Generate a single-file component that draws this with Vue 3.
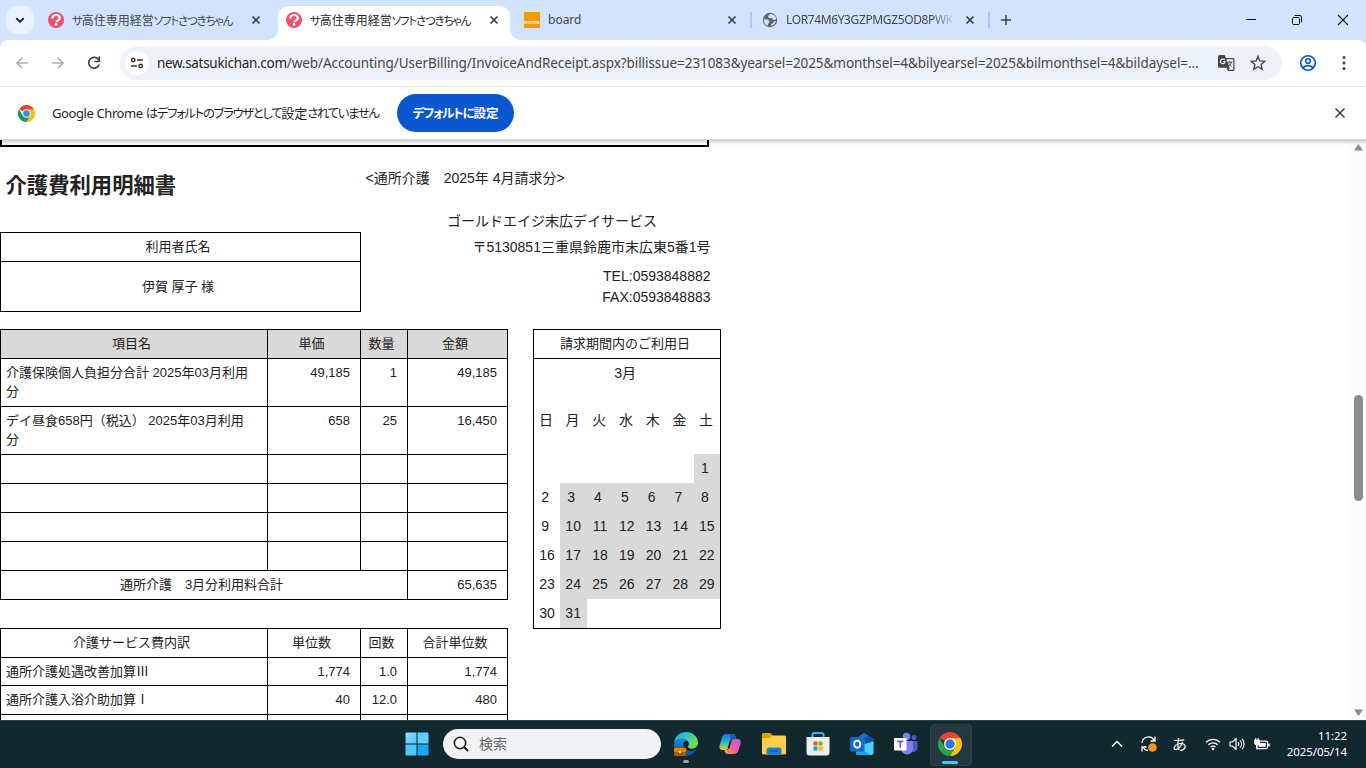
<script setup>
const tabs = [
  { parts: ['サ', '高住専用経営', 'ソフトさつきちゃん'], icon: 'q', active: false, sep: false },
  { parts: ['サ', '高住専用経営', 'ソフトさつきちゃん'], icon: 'q', active: true, sep: false },
  { parts: ['board'], icon: 'norma', active: false, sep: true, latin: true },
  { parts: ['LOR74M6Y3GZPMGZ5OD8PWK'], icon: 'globe', active: false, sep: true, latin: true, fade: true },
]
const items = [
  ['介護保険個人負担分合計 2025年03月利用分', '49,185', '1', '49,185'],
  ['デイ昼食658円（税込） 2025年03月利用分', '658', '25', '16,450'],
]
const services = [
  ['通所介護処遇改善加算Ⅲ', '1,774', '1.0', '1,774'],
  ['通所介護入浴介助加算Ⅰ', '40', '12.0', '480'],
  ['', '', '', ''],
]
const weekdays = ['日', '月', '火', '水', '木', '金', '土']
const days = []
for (let i = -5; i <= 36; i++) {
  const inMonth = i >= 1 && i <= 31
  const col = (i + 5) % 7
  days.push({
    text: inMonth ? (i < 10 ? i + ' ' : String(i)) : '',
    used: inMonth && col !== 0,
  })
}
</script>

<template>
  <div class="screen">
    <header class="strip">
      <div class="tabsearch">
        <svg width="12" height="12" viewBox="0 0 12 12"><path d="M2.3 4.2 6 7.9l3.7-3.7" fill="none" stroke="#1f1f1f" stroke-width="1.9" /></svg>
      </div>
      <div v-for="(t, i) in tabs" :key="i" class="tab" :class="{ active: t.active, sep: t.sep }">
        <svg v-if="t.icon === 'q'" class="fav" width="16" height="16" viewBox="0 0 16 16">
          <circle cx="8" cy="8" r="8" fill="#f0506e" />
          <path d="M4.300 6.500C4.400 4.400 6 3 8.100 3c2.100 0 3.700 1.200 3.700 3 0 2.400-3 2.200-3.500 4.200" fill="none" stroke="#fff" stroke-width="2.200" />
          <circle cx="8" cy="12.400" r="1.300" fill="#fff" />
        </svg>
        <div v-else-if="t.icon === 'norma'" class="fav norma">norma</div>
        <svg v-else class="fav" width="16" height="16" viewBox="0 0 16 16">
          <circle cx="8" cy="8" r="7.2" fill="#5f6368" />
          <path d="M8.200 1.900 6.200 3.800v1.600L8 6.200l2-.2.5 1.600 2.200.3 1.600-1.200C13.900 4 11.400 1.900 8.200 1.900zM1.800 7.200l3.600.3 2.200 1.800-.6 1.800L5.800 12v1.800C3.300 12.900 1.700 10.400 1.800 7.200zM9 13.900l.3-1.900 2-1 .6-1.700 2-.3c-.5 2.600-2.500 4.600-4.900 4.900z" fill="#d3e3fd" />
        </svg>
        <span class="title" :class="{ latin: t.latin, fade: t.fade }"><span v-for="(p, k) in t.parts" :key="k" :class="{ kana: !t.latin && k !== 1 }">{{ p }}</span></span>
        <svg class="x" width="16" height="16" viewBox="0 0 16 16"><path d="m4.500 4.500 7 7m0-7-7 7" stroke="#3c3f43" stroke-width="1.700" /></svg>
      </div>
      <div class="plus">
        <svg width="12" height="12" viewBox="0 0 12 12"><path d="M6 1v10M1 6h10" stroke="#3c4043" stroke-width="1.500" /></svg>
      </div>
      <div class="winctl">
        <svg width="46" height="40" viewBox="0 0 46 40"><path d="M18 19.500h10" stroke="#111" /></svg>
        <svg width="46" height="40" viewBox="0 0 46 40"><rect x="18.500" y="17.500" width="7" height="7" rx="1.200" fill="none" stroke="#111" /><path d="M20.500 15.500h5.500a1.500 1.500 0 0 1 1.500 1.500v5.500" fill="none" stroke="#111" /></svg>
        <svg width="46" height="40" viewBox="0 0 46 40"><path d="m18 15 10 10m0-10L18 25" stroke="#111" stroke-width="1.100" /></svg>
      </div>
    </header>

    <div class="toolbarwrap">
      <div class="toolbar">
        <svg class="nav" width="36" height="46" viewBox="0 0 36 46"><path d="M28 23H17m5.300-5.200L17 23l5.300 5.200" fill="none" stroke="#aaacaf" stroke-width="1.600" /></svg>
        <svg class="nav" width="36" height="46" viewBox="0 0 36 46"><path d="M16 23h11m-5.300-5.200L27 23l-5.300 5.200" fill="none" stroke="#aaacaf" stroke-width="1.600" /></svg>
        <svg class="nav" width="36" height="46" viewBox="0 0 36 46"><path d="M26.600 19.800a5.400 5.400 0 1 0 .6 4.700" fill="none" stroke="#3c4043" stroke-width="1.700" /><path d="M27.300 16.600v4.900h-4.900" fill="none" stroke="#3c4043" stroke-width="1.700" /></svg>
        <div class="omni">
          <div class="site">
            <svg width="14" height="14" viewBox="0 0 14 14" fill="none" stroke="#303134" stroke-width="1.500"><circle cx="3.200" cy="4" r="1.700" /><path d="M7 4h6M1 10h6" /><circle cx="10.700" cy="10" r="1.700" /></svg>
          </div>
          <div class="url"><b>new.satsukichan.com</b>/web/Accounting/UserBilling/InvoiceAndReceipt.aspx?billissue=231083&amp;yearsel=2025&amp;monthsel=4&amp;bilyearsel=2025&amp;bilmonthsel=4&amp;bildaysel=...</div>
          <svg class="translate" width="18" height="18" viewBox="0 0 18 18">
            <path d="M2.500 1h5.300l1 3H16a1.500 1.500 0 0 1 1.500 1.500v10A1.500 1.500 0 0 1 16 17h-5.200l-1.200-3.300H2.500A1.500 1.500 0 0 1 1 12.200V2.500A1.500 1.500 0 0 1 2.500 1z" fill="#474747" />
            <path d="M9.300 5.200H15.500a.8.800 0 0 1 .8.800v9a.8.800 0 0 1-.8.800H11.700l1-2z" fill="#edf1fa" />
            <path d="M7.700 6.100a2.300 2.300 0 1 0 .3 1.700H5.900" fill="none" stroke="#fff" stroke-width="1.100" />
            <path d="M10.300 8.200h5M12.800 7v1.200m1.500 0c-.4 1.800-1.300 3-3 4m.5-2.800 2.900 3.200" fill="none" stroke="#474747" />
          </svg>
          <svg class="star" width="18" height="18" viewBox="0 0 18 18"><path d="m9 2.400 1.900 4.500 4.900.4-3.700 3.200 1.100 4.800L9 12.700l-4.200 2.600 1.100-4.800-3.700-3.200 4.900-.4z" fill="none" stroke="#474747" stroke-width="1.400" /></svg>
        </div>
        <svg class="user" width="18" height="18" viewBox="0 0 18 18" fill="none" stroke="#0b57d0" stroke-width="1.600"><circle cx="9" cy="9" r="7.300" /><circle cx="9" cy="7" r="2.300" /><path d="M4 14.100c1.200-1.800 3-2.500 5-2.500s3.800.7 5 2.500" /></svg>
        <svg class="dots" width="4" height="16" viewBox="0 0 4 16" fill="#474747"><circle cx="2" cy="2.500" r="1.600" /><circle cx="2" cy="8" r="1.600" /><circle cx="2" cy="13.500" r="1.600" /></svg>
      </div>
    </div>

    <div class="infobar">
      <svg width="17" height="17" viewBox="0 0 24 24">
        <path d="M12 12 1.600 6A12 12 0 0 1 22.400 6z" fill="#ea4335" />
        <path d="M12 6h10.400A12 12 0 0 1 12 24l5.200-9z" fill="#fbbc05" />
        <path d="M1.600 6A12 12 0 0 0 12 24l5.200-9H6.800z" fill="#0f9d58" />
        <circle cx="12" cy="12" r="6" fill="#fff" /><circle cx="12" cy="12" r="4.700" fill="#4285f4" />
      </svg>
      <span class="msg"><span class="gc">Google Chrome </span><span class="kana">はデフォルトのブラウザとして</span>設定<span class="kana">されていません</span></span>
      <button class="setdef"><span class="kana">デフォルトに</span>設定</button>
      <svg class="close" width="16" height="16" viewBox="0 0 16 16"><path d="m3.500 3.500 9 9m0-9-9 9" stroke="#3c4043" stroke-width="1.500" /></svg>
    </div>

    <main class="page">
      <div class="shade"></div>
      <div class="doc">
        <div class="prevbox"></div>
        <div class="top">
          <div class="left">
            <h1>介護費利用明細書</h1>
            <div class="who">
              <div class="wh">利用者氏名</div>
              <div class="wn">伊賀 厚子 様</div>
            </div>
          </div>
          <div class="right">
            <div class="period">&lt;通所介護　2025年 4月請求分&gt;</div>
            <div class="fac">ゴールドエイジ末広デイサービス</div>
            <div class="addr">〒5130851三重県鈴鹿市末広東5番1号</div>
            <div class="tel">TEL:0593848882</div>
            <div class="fax">FAX:0593848883</div>
          </div>
        </div>
        <div class="cols">
          <div>
            <div class="tbl">
              <div class="row head grey"><div>項目名</div><div>単価</div><div>数量</div><div>金額</div></div>
              <div v-for="(r, i) in items" :key="i" class="row tall"><div v-for="(c, j) in r" :key="j">{{ c }}</div></div>
              <div v-for="n in 4" :key="'e' + n" class="row"><div></div><div></div><div></div><div></div></div>
              <div class="row total"><div>通所介護　3月分利用料合計</div><div>65,635</div></div>
            </div>
            <div class="tbl second">
              <div class="row head"><div>介護サービス費内訳</div><div>単位数</div><div>回数</div><div>合計単位数</div></div>
              <div v-for="(r, i) in services" :key="i" class="row" :class="{ low: i === 0 }"><div v-for="(c, j) in r" :key="j">{{ c }}</div></div>
            </div>
          </div>
          <div class="cal">
            <div class="ch">請求期間内のご利用日</div>
            <div class="cm">3月 </div>
            <div class="cg wk"><div v-for="w in weekdays" :key="w">{{ w }}</div></div>
            <div class="cg"><div v-for="(d, i) in days" :key="i" :class="{ used: d.used }">{{ d.text }}</div></div>
          </div>
        </div>
      </div>
      <div class="sb">
        <svg width="9" height="7" viewBox="0 0 9 7"><path d="M4.500 0 9 6.500H0z" fill="#8b8b8b" /></svg>
        <div class="thumb"></div>
        <svg width="9" height="7" viewBox="0 0 9 7"><path d="M4.500 7 9 .5H0z" fill="#8b8b8b" /></svg>
      </div>
    </main>

    <footer class="bar">
      <div class="app start">
        <svg width="24" height="24" viewBox="0 0 24 24">
          <defs><linearGradient id="win" x1="0" y1="0" x2="1" y2="1"><stop offset="0" stop-color="#8fe3ff" /><stop offset="1" stop-color="#4cc3fb" /></linearGradient></defs>
          <path d="M.5 1.500a1 1 0 0 1 1-1H11.500v11H.5z" fill="url(#win)" /><path d="M12.500.5h10a1 1 0 0 1 1 1v10h-11z" fill="#5fd0fd" />
          <path d="M.5 12.500h11v11h-10a1 1 0 0 1-1-1z" fill="#4cc8fd" /><path d="M12.500 12.500h11v10a1 1 0 0 1-1 1h-10z" fill="#19a5fb" />
        </svg>
      </div>
      <div class="find">
        <svg width="16" height="16" viewBox="0 0 16 16"><circle cx="7" cy="7" r="5.700" fill="none" stroke="#222" stroke-width="1.600" /><path d="m11 11 4 4" stroke="#222" stroke-width="2" /></svg>
        <span>検索</span>
      </div>
      <div class="app">
        <svg width="24" height="24" viewBox="0 0 24 24">
          <defs>
            <linearGradient id="e1" x1="0" y1="0" x2="1" y2=".5"><stop offset="0" stop-color="#1ba0e2" /><stop offset=".5" stop-color="#35c1d4" /><stop offset="1" stop-color="#6be04b" /></linearGradient>
            <linearGradient id="e2" x1="0" y1="0" x2="0" y2="1"><stop offset="0" stop-color="#1b8fe0" /><stop offset="1" stop-color="#0c4a9a" /></linearGradient>
          </defs>
          <path d="M0 12C.8 8.900 4.500 6.800 8.600 6.800c2 0 3.700.7 4.800 1.900C9.500 8.500 9 11.700 9.500 13c1 4 4.500 6.600 7.500 6.200 2-.3 3.500-.8 4.800-1.600C19.800 21.800 16.300 24 12 24 5.300 24-.4 18.500 0 12z" fill="url(#e2)" />
          <path d="M0 11C.6 4.500 5.500 0 12 0c7 0 12 5 12 10.500 0 4-2.700 6.200-6 6.200-2.300 0-4.200-.8-4.200-1.900 0-.7 1-1.200 1-2.900C14.800 9 12 6.800 8.600 6.800 4.500 6.800 1.200 9 0 11z" fill="url(#e1)" />
          <rect x="0" y="16" width="12" height="8" fill="#e08600" /><rect x="0" y="20" width="12" height="4" fill="#a65a00" /><rect x="5" y="19" width="2" height="2" fill="#ffdc6b" />
        </svg>
        <i class="pip"></i>
      </div>
      <div class="app">
        <svg width="24" height="24" viewBox="0 0 24 24">
          <defs>
            <linearGradient id="c1" x1="0" y1="0" x2="0" y2="1"><stop offset="0" stop-color="#1470d8" /><stop offset=".5" stop-color="#29b5c9" /><stop offset="1" stop-color="#e5d321" /></linearGradient>
            <linearGradient id="c2" x1="1" y1="0" x2="0" y2="1"><stop offset="0" stop-color="#b35df0" /><stop offset=".5" stop-color="#ef5a9b" /><stop offset="1" stop-color="#ffa05a" /></linearGradient>
          </defs>
          <path d="M8.500 2h6.300c1.700 0 2.300 1 2.700 2.300l.8 2.700h-3c-1.700 0-2.500.8-3 2.500l-1.700 5.700c-.4 1.500-1.300 2.800-3.200 2.800H4.500C2 18 1 16 1.600 13.500l2.300-8C4.500 3.400 5.800 2 8.500 2z" fill="url(#c1)" />
          <path d="M12.500 2h2.300c1.700 0 2.300 1 2.700 2.300l.8 2.700H15c-1.500 0-2.400.8-2.800 2z" fill="#1459bd" />
          <path d="M15.500 22H10c-1.700 0-2.700-1-3.100-2.300L6.400 18h2c1.700 0 2.700-1 3.200-2.800l1.600-5.500C13.700 8 14.600 7 16.400 7h3.200c2.500 0 3.600 2 3 4.500l-2.200 7c-.7 2.100-2.200 3.500-4.900 3.500z" fill="url(#c2)" />
          <path d="m13.400 9-2 7H9.600l1.800-6c.3-.6 1-1 2-1z" fill="#142a30" />
        </svg>
      </div>
      <div class="app">
        <svg width="26" height="24" viewBox="0 0 26 24">
          <path d="M1 2.500A1.500 1.500 0 0 1 2.500 1h7L12 3.500 10 7H1z" fill="#e29b00" />
          <path d="M1 6h8l2.500-2.500h12A1.500 1.500 0 0 1 25 5v16a1.500 1.500 0 0 1-1.500 1.500h-21A1.500 1.500 0 0 1 1 21z" fill="#ffcf48" />
          <path d="M5.500 22.500V18A2.500 2.500 0 0 1 8 15.500h10a2.500 2.500 0 0 1 2.500 2.500v4.500z" fill="#1683d8" /><path d="M8.500 19h9" stroke="#0a5da8" stroke-width="1.500" />
        </svg>
      </div>
      <div class="app">
        <svg width="24" height="24" viewBox="0 0 24 24">
          <path d="M6.500 6V2.500a1.500 1.500 0 0 1 1.500-1.500h8a1.500 1.500 0 0 1 1.500 1.500V6" fill="none" stroke="#2ab4f0" stroke-width="2" />
          <path d="M.5 5h23v15.500A3 3 0 0 1 20.500 23.500h-17a3 3 0 0 1-3-3z" fill="#eeeeef" />
          <path d="M7.500 9.500h4v4h-4z" fill="#f25022" /><path d="M12.500 9.500h4v4h-4z" fill="#7fba00" /><path d="M7.500 14.500h4v4h-4z" fill="#00a4ef" /><path d="M12.500 14.500h4v4h-4z" fill="#ffb900" />
        </svg>
      </div>
      <div class="app">
        <svg width="26" height="24" viewBox="0 0 26 24">
          <path d="M6 7 15 1l9.500 6v5H6z" fill="#1275cf" /><path d="M8 5h13v12H8z" fill="#35a8ea" /><path d="m14 6 6-2 4.500 4-7.500 6z" fill="#0b4fa5" />
          <path d="M7 14.500 24.500 9.500v11a2.500 2.500 0 0 1-2.500 2.500H9.500A2.500 2.500 0 0 1 7 20.500z" fill="#44d4f7" /><path d="M7 14 22 23H9.500A2.500 2.500 0 0 1 7 20.500z" fill="#1aa1e6" />
          <rect x="1" y="5" width="14.500" height="14.500" rx="1" fill="#0f6cca" /><ellipse cx="8.200" cy="12.200" rx="3.100" ry="3.600" fill="none" stroke="#fff" stroke-width="1.900" />
        </svg>
      </div>
      <div class="app">
        <svg width="26" height="24" viewBox="0 0 26 24">
          <circle cx="13.500" cy="4.500" r="3.700" fill="#7b83eb" /><circle cx="21" cy="5.500" r="2.500" fill="#5059c9" />
          <path d="M18 9h6.500v7.500a4 4 0 0 1-6.500 2.500z" fill="#5059c9" /><path d="M8 9h12v7.500a6 6 0 0 1-12 0z" fill="#7b83eb" />
          <rect x="1" y="6" width="12.500" height="12.500" rx="1" fill="#fff" /><path d="M4.300 9.300h6M7.300 9.300v6.500" stroke="#5b5fc7" stroke-width="1.700" />
        </svg>
      </div>
      <div class="app on">
        <svg width="24" height="24" viewBox="0 0 24 24">
          <path d="M12 12 1.600 6A12 12 0 0 1 22.400 6z" fill="#ea4335" />
          <path d="M12 6h10.400A12 12 0 0 1 12 24l5.200-9z" fill="#fbc116" />
          <path d="M1.600 6A12 12 0 0 0 12 24l5.200-9H6.800z" fill="#2da14c" />
          <circle cx="12" cy="12" r="6" fill="#fff" /><circle cx="12" cy="12" r="4.700" fill="#3474e0" />
        </svg>
        <i class="line"></i>
      </div>
      <div class="tray">
        <svg class="t1" width="12" height="8" viewBox="0 0 12 8"><path d="m1 6.500 5-5 5 5" fill="none" stroke="#fff" stroke-width="1.400" /></svg>
        <svg class="t2" width="18" height="18" viewBox="0 0 18 18"><path d="M2 8a6.500 6.500 0 0 1 12-3M15 1.500V6h-4.500M8 15.500a6.500 6.500 0 0 1-5-3M2 16.500V12h4.500" fill="none" stroke="#fff" stroke-width="1.300" /><circle cx="12.500" cy="12.500" r="4.300" fill="#f7931e" /></svg>
        <span class="ime">あ</span>
        <svg class="t3" width="16" height="14" viewBox="0 0 16 14"><path d="M1 5.300a10 10 0 0 1 14 0M3.300 7.800a6.700 6.700 0 0 1 9.400 0M5.500 10.100a3.500 3.500 0 0 1 5 0" fill="none" stroke="#fff" stroke-width="1.300" /><circle cx="8" cy="12" r="1.300" fill="#fff" /></svg>
        <svg class="t4" width="16" height="14" viewBox="0 0 16 14"><path d="M1 5h2.500L7 1.800v10.400L3.500 9H1z" fill="none" stroke="#fff" stroke-width="1.200" /><path d="M9 5a3 3 0 0 1 0 4M11 3.300a5.400 5.400 0 0 1 0 7.400M13 1.800a7.500 7.500 0 0 1 0 10.400" fill="none" stroke="#fff" stroke-width="1.100" /></svg>
        <svg class="t5" width="18" height="14" viewBox="0 0 18 14"><rect x="3.600" y="4.100" width="11" height="7.500" rx="1.500" fill="none" stroke="#fff" stroke-width="1.200" /><rect x="5.500" y="6" width="7.300" height="3.800" fill="#fff" /><path d="M16 6.500v3" stroke="#fff" stroke-width="1.500" /><path d="M1.500 3h5v2.500a2.500 2.500 0 0 1-5 0zM2.800 1v2M5.200 1v2M4 8v4.500" fill="#fff" stroke="#fff" /></svg>
        <div class="clock"><div>11:22</div><div>2025/05/14</div></div>
      </div>
    </footer>
  </div>
</template>

<style>
body { margin: 0; overflow: hidden; }
</style>

<style scoped>
* { box-sizing: border-box; }
.screen { width: 1366px; height: 768px; display: flex; flex-direction: column; overflow: hidden; background: #fff; font-family: "Noto Sans", "Noto Sans CJK JP", sans-serif; }
svg { display: block; flex: none; }
.strip { height: 40px; flex: none; display: flex; background: #d3e3fd; }
.tabsearch { width: 28px; height: 28px; margin: 6px; border-radius: 10px; background: #e9f1fe; display: flex; align-items: center; justify-content: center; }
.tab { width: 238px; height: 40px; padding-left: 8px; display: flex; align-items: center; position: relative; }
.tab > * { position: relative; }
.tab.active { z-index: 1; }
.tab.active::before { content: ""; position: absolute; left: 0; top: 6px; width: 232px; height: 34px; border-radius: 10px 10px 0 0; background: #fff; }
.tab.active::after { content: ""; position: absolute; left: -10px; bottom: 0; width: 252px; height: 10px; background: radial-gradient(circle at 0 0, transparent 9.500px, #fff 10px) 0 0 / 10px 10px no-repeat, radial-gradient(circle at 100% 0, transparent 9.500px, #fff 10px) 100% 0 / 10px 10px no-repeat; }
.tab.sep::before { content: ""; position: absolute; left: 234px; top: 12px; width: 2px; height: 16px; background: #a8c7fa; }
.fav { flex: none; }
.norma { width: 16px; height: 16px; background: #f29a05; color: #fff; font: bold 5px/20px "Liberation Sans", sans-serif; text-align: center; }
.title { width: 168px; margin-left: 8px; white-space: nowrap; font: 12px/18px "Noto Sans CJK JP", sans-serif; font-feature-settings: "palt"; color: #45474a; }
.title .kana { font-size: 11.500px; letter-spacing: -1.200px; }
.active .title { color: #1f1f1f; }
.title.latin { font: 12px/20px "Noto Sans", sans-serif; }
.title.fade { letter-spacing: -.38px; -webkit-mask-image: linear-gradient(90deg, #000 145px, transparent 170px); mask-image: linear-gradient(90deg, #000 145px, transparent 170px); }
.x { margin-left: 8px; }
.plus { width: 28px; display: flex; align-items: center; justify-content: center; }
.winctl { margin-left: auto; display: flex; }

.toolbarwrap { flex: none; background: #d3e3fd; height: 47px; }
.toolbar { height: 47px; border-radius: 8px 8px 0 0; background: #fff; border-bottom: 1px solid #dfe1e5; display: flex; align-items: center; }
.omni { margin-left: 12px; width: 1162px; height: 34px; border-radius: 17px; background: #edf1fa; display: flex; align-items: center; padding-left: 5px; }
.site { width: 24px; height: 24px; border-radius: 50%; background: #fff; display: flex; align-items: center; justify-content: center; }
.url { width: 1044px; margin-left: 8px; font-size: 13.500px; line-height: 20px; white-space: nowrap; color: #474747; letter-spacing: -.066px; }
.url b { font-weight: 400; color: #1f1f1f; letter-spacing: -.3px; }
.translate { margin-left: 16px; }
.star { margin-left: 14px; }
.user { margin-left: 17px; }
.dots { margin-left: 25px; }

.infobar { flex: none; height: 53px; display: flex; align-items: center; padding-left: 18px; background: #fff; border-bottom: 1px solid #d6d8d6; }
.msg { width: 345px; margin-left: 17px; white-space: nowrap; font: 13px/20px "Noto Sans CJK JP", sans-serif; font-feature-settings: "palt"; color: #1f1f1f; }
.msg .kana { font-size: 12.400px; letter-spacing: -1.330px; }
.gc { font-family: "Noto Sans", sans-serif; letter-spacing: -.4px; }
.setdef { width: 117px; height: 38px; border: 0; padding: 0; border-radius: 19px; background: #0b57d0; color: #fff; font: bold 12.500px/20px "Noto Sans CJK JP", sans-serif; font-feature-settings: "palt"; white-space: nowrap; }
.setdef .kana { font-size: 12.500px; letter-spacing: -1.200px; }
.close { margin-left: auto; margin-right: 18px; }

.page { height: 580px; flex: none; position: relative; display: flex; overflow: hidden; font-family: "Liberation Sans", "Noto Sans CJK JP", sans-serif; color: #222; background: #fff; }
.shade { position: absolute; left: 0; top: 0; width: 100%; height: 5px; background: linear-gradient(#cfd1cf, rgba(255, 255, 255, 0)); }
.doc { width: 1349px; flex: none; position: relative; }
.prevbox { width: 709px; height: 7px; border: 2px solid #000; border-top: 0; }
.top { display: flex; height: 182px; }
.left { width: 361px; }
h1 { margin: 21px 0 32px 5.500px; font: bold 21.330px/32px "Noto Sans CJK JP", sans-serif; white-space: nowrap; }
.who { width: 361px; height: 80px; border: 1px solid #000; font-size: 13px; text-align: center; }
.wh { height: 29px; line-height: 27px; border-bottom: 1px solid #000; padding-right: 5px; }
.wn { height: 49px; line-height: 49px; padding-right: 5px; }
.right { width: 350px; font-size: 14px; line-height: 20px; text-align: right; white-space: nowrap; }
.period { text-align: left; margin: 21px 0 0 4.500px; }
.fac { text-align: left; margin: 23px 0 0 86px; }
.addr { margin: 6px .5px 0 0; }
.tel { margin: 9px .5px 0 0; }
.fax { margin: 1px .5px 0 0; }
.cols { display: flex; align-items: flex-start; }
.tbl { width: 508px; border-left: 1px solid #000; border-top: 1px solid #000; font-size: 13px; line-height: 19px; }
.second { margin-top: 28px; }
.row { display: grid; grid-template-columns: 267px 93px 47px 100px; height: 29px; }
.row.tall { height: 48px; }
.row.low { height: 28px; }
.row > div { border-right: 1px solid #000; border-bottom: 1px solid #000; padding: 4px 10px 0 0; text-align: right; }
.row > div:first-child { text-align: left; padding: 4px 16px 0 5px; }
.row.head > div, .row.head > div:first-child { text-align: center; padding: 4px 5px 0 0; }
.row.grey > div { background: #d9d9d9; }
.row.total { grid-template-columns: 407px 100px; }
.row.total > div:first-child { text-align: center; padding-right: 10px; }
.cal { margin-left: 25px; width: 188px; height: 300px; border: 1px solid #000; font-size: 14px; }
.ch { height: 29px; line-height: 27px; border-bottom: 1px solid #000; text-align: center; font-size: 13px; padding-right: 4px; }
.cm { height: 48px; line-height: 29px; text-align: center; white-space: pre; }
.cg { display: grid; grid-template-columns: 26px repeat(5, 26.800px) 26px; line-height: 29px; grid-auto-rows: 29px; text-align: center; white-space: pre; }
.cg > div { padding-right: .5px; }
.cg > div:nth-child(7n + 1) { padding-right: 0; }
.wk { height: 47px; line-height: 27px; }
.wk > div, .wk > div:nth-child(7n + 1) { padding-right: 2px; }
.used { background: #d9d9d9; }
.sb { width: 17px; flex: none; background: #fcfcfc; display: flex; flex-direction: column; align-items: center; padding: 4px 0 4px 1px; }
.thumb { width: 9px; height: 106px; border-radius: 4.500px; background: #8b8b8b; margin: 244px 0 auto; }

.bar { height: 48px; flex: none; background: #11282f; border-top: 1px solid #2c4046; display: flex; align-items: center; padding-left: 395px; position: relative; }
.app { width: 44px; height: 47px; flex: none; display: flex; align-items: center; justify-content: center; position: relative; padding-bottom: 2px; }
.start { width: 44px; }
.find { width: 218px; height: 30px; border-radius: 15px; background: #f1f3f5; margin: 0 3px 2px 4px; display: flex; align-items: center; padding-left: 10px; color: #666; font: 14px/20px "Noto Sans CJK JP", sans-serif; }
.find span { margin: 0 0 2px 10px; }
.pip { position: absolute; left: 19px; bottom: 5px; width: 6px; height: 3px; border-radius: 2px; background: #9aa4a7; }
.on::before { content: ""; position: absolute; left: 2px; top: 3px; width: 40px; height: 40px; border-radius: 4px; background: #24383f; border: 1px solid #2e4148; }
.on svg { position: relative; }
.line { position: absolute; left: 14px; bottom: 4px; width: 16px; height: 3px; border-radius: 2px; background: #4cc2ff; }
.tray { flex: 1; display: flex; align-items: center; color: #fff; padding: 0 0 2px 139px; }
.t2 { margin-left: 17px; }
.ime { margin-left: 14px; width: 18px; font: 15px/20px "Noto Sans CJK JP", sans-serif; }
.t3 { margin-left: 15px; }
.t4 { margin-left: 8px; }
.t5 { margin-left: 8px; }
.clock { margin-left: auto; margin-right: 19px; text-align: right; font: 11.500px/16px "Noto Sans", sans-serif; letter-spacing: -.1px; }
</style>
